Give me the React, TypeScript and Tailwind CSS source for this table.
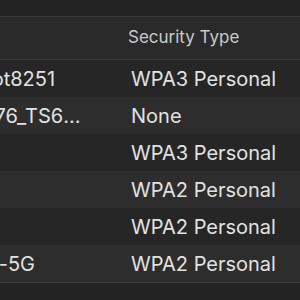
import React from 'react';

const networks = [
  { name: 'N Hotspot8251', security: 'WPA3 Personal' },
  { name: 'DIRECT-76_TS6300series', security: 'None' },
  { name: 'Office', security: 'WPA3 Personal' },
  { name: 'Kitchen', security: 'WPA2 Personal' },
  { name: 'Garage', security: 'WPA2 Personal' },
  { name: 'Comcast-5G', security: 'WPA2 Personal' },
];

export default function App() {
  return (
    <div
      className="w-[300px] h-[300px] overflow-hidden bg-[#232323] text-[#e2e2e2]"
      style={{ fontFamily: 'Inter, "Liberation Sans", sans-serif' }}
    >
      {/* Top strip */}
      <div className="h-[17px] border-b border-[#3a3a3a]" />

      {/* Column header */}
      <div className="flex h-[43px] items-center bg-[#2a2a2a] border-b border-[#3a3a3a]">
        <div className="w-[128px] shrink-0" />
        <span className="text-[17px] text-[#c9c9c9]">Security Type</span>
      </div>

      {/* Rows (table scrolled horizontally, first column partly hidden) */}
      <div className="border-b border-[#3d3d3d]">
        {networks.map((n, i) => (
          <div
            key={n.name}
            className={`flex h-[37px] items-center ${i % 2 === 0 ? 'bg-[#262626]' : 'bg-[#2d2d2d]'}`}
          >
            <div className="-ml-[85px] w-[212px] shrink-0 pr-[36px] truncate text-[20px]">{n.name}</div>
            <div className="pl-[4px] text-[20px]">{n.security}</div>
          </div>
        ))}
      </div>
    </div>
  );
}
